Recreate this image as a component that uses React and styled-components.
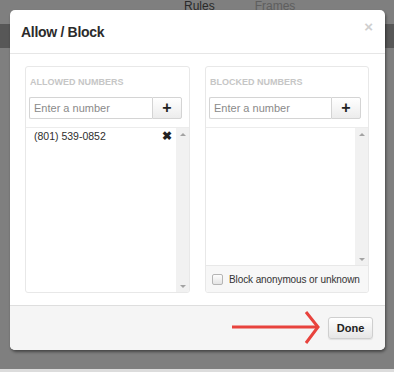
import React, { useState } from 'react';
import styled, { createGlobalStyle } from 'styled-components';

const Global = createGlobalStyle`
  html, body { margin: 0; padding: 0; }
  body {
    width: 394px;
    height: 372px;
    overflow: hidden;
    background: #7f7f7f;
    font-family: "Liberation Sans", Arial, sans-serif;
  }
`;

const Page = styled.div`
  position: relative;
  width: 394px;
  height: 372px;
  display: flex;
  flex-direction: column;
`;

const Tabs = styled.div`
  height: 24px;
  display: flex;
  gap: 40px;
  padding-left: 184px;
  font-size: 12px;
  line-height: 12px;
  span { color: #2a2a2a; }
  span + span { color: #5e5e5e; }
`;

const DarkBand = styled.div`
  height: 24px;
  background: #575757;
`;

const Filler = styled.div`
  flex: 1;
`;

const BottomStrip = styled.div`
  height: 3px;
  background: #dcdcdc;
`;

const Modal = styled.div`
  position: absolute;
  left: 10px;
  top: 10px;
  width: 375px;
  height: 340px;
  background: #fff;
  border-radius: 5px;
  box-shadow: 1px 2px 3px rgba(0, 0, 0, 0.45);
  display: flex;
  flex-direction: column;
  overflow: hidden;
`;

const Header = styled.div`
  height: 43px;
  border-bottom: 1px solid #e6e6e6;
  display: flex;
  align-items: center;
  padding: 0 12px 0 11px;
  position: relative;
`;

const Title = styled.h3`
  margin: 1px 0 0;
  font-size: 14px;
  letter-spacing: -0.3px;
  font-weight: bold;
  color: #2b2b2b;
`;

const Close = styled.span`
  position: absolute;
  right: 12px;
  top: 8px;
  font-size: 15px;
  font-weight: bold;
  color: #cfcfcf;
`;

const Body = styled.div`
  flex: 1;
  display: grid;
  grid-template-columns: 165px 164px;
  gap: 15px;
  padding: 12px 16px 12px 15px;
`;

const Panel = styled.div`
  border: 1px solid #e8e8e8;
  border-radius: 3px;
  display: flex;
  flex-direction: column;
  overflow: hidden;
`;

const PanelTitle = styled.div`
  padding: 10px 4px 0;
  height: 20px;
  font-size: 9px;
  font-weight: bold;
  color: #c6c6c6;
  text-transform: uppercase;
`;

const InputRow = styled.div`
  display: flex;
  margin: 0 7px 8px 3px;
  height: 22px;
`;

const Input = styled.input`
  flex: 1;
  min-width: 0;
  box-sizing: border-box;
  height: 22px;
  border: 1px solid #d4d4d4;
  border-right: none;
  border-radius: 2px 0 0 2px;
  padding: 0 4px;
  font-family: inherit;
  font-size: 11px;
  outline: none;
  &::placeholder { color: #8a8a8a; }
`;

const AddButton = styled.button`
  width: 30px;
  height: 22px;
  border: 1px solid #d4d4d4;
  border-radius: 0 2px 2px 0;
  background: linear-gradient(#ffffff, #ececec);
  font-family: inherit;
  font-size: 16px;
  font-weight: bold;
  color: #222;
  padding: 0;
  line-height: 18px;
`;

const List = styled.div`
  flex: 1;
  border-top: 1px solid #ececec;
  display: flex;
  min-height: 0;
`;

const Items = styled.div`
  flex: 1;
`;

const Item = styled.div`
  display: flex;
  align-items: center;
  justify-content: space-between;
  padding: 0 4px 0 8px;
  height: 16px;
  font-size: 10.5px;
  color: #2e2e2e;
`;

const Remove = styled.span`
  font-size: 12px;
  font-weight: bold;
  color: #222;
`;

const Scrollbar = styled.div`
  width: 13px;
  background: #f1f1f1;
  display: flex;
  flex-direction: column;
  justify-content: space-between;
  align-items: center;
  padding: 5px 0 4px;
`;

const Arrow = styled.span`
  width: 0;
  height: 0;
  border-left: 3px solid transparent;
  border-right: 3px solid transparent;
  ${p => p.$down
    ? 'border-top: 3px solid #a3a3a3;'
    : 'border-bottom: 3px solid #a3a3a3;'}
`;

const CheckRow = styled.label`
  height: 26px;
  border-top: 1px solid #e8e8e8;
  background: #f7f7f7;
  display: flex;
  align-items: center;
  gap: 6px;
  padding-left: 6px;
  font-size: 10px;
  letter-spacing: -0.1px;
  white-space: nowrap;
  color: #333;
`;

const Box = styled.span`
  flex: none;
  width: 9px;
  height: 9px;
  border: 1px solid #b5b5b5;
  border-radius: 2px;
  background: linear-gradient(#fdfdfd, #e4e4e4);
`;

const Footer = styled.div`
  height: 44px;
  border-top: 1px solid #dedede;
  background: #f5f5f5;
  display: flex;
  align-items: center;
  justify-content: flex-end;
  padding-right: 12px;
  position: relative;
`;

const Done = styled.button`
  width: 45px;
  height: 22px;
  margin-top: -1px;
  border: 1px solid #cfcfcf;
  border-radius: 3px;
  background: linear-gradient(#ffffff, #e6e6e6);
  box-shadow: 0 1px 1px rgba(0, 0, 0, 0.08);
  font-family: inherit;
  font-size: 11px;
  font-weight: bold;
  color: #222;
  padding: 0;
`;

const Annotation = styled.svg`
  position: absolute;
  left: 212px;
  top: 3px;
`;

function NumberPanel({ title, numbers, footer }) {
  const [value, setValue] = useState('');
  return (
    <Panel>
      <PanelTitle>{title}</PanelTitle>
      <InputRow>
        <Input placeholder="Enter a number" value={value} onChange={e => setValue(e.target.value)} />
        <AddButton>+</AddButton>
      </InputRow>
      <List>
        <Items>
          {numbers.map((n, idx) => (
            <Item key={idx}>
              {n}
              <Remove>✖</Remove>
            </Item>
          ))}
        </Items>
        <Scrollbar>
          <Arrow />
          <Arrow $down />
        </Scrollbar>
      </List>
      {footer}
    </Panel>
  );
}

export default function App() {
  return (
    <Page>
      <Global />
      <Tabs>
        <span>Rules</span>
        <span>Frames</span>
      </Tabs>
      <DarkBand />
      <Filler />
      <BottomStrip />

      <Modal>
        <Header>
          <Title>Allow / Block</Title>
          <Close>×</Close>
        </Header>
        <Body>
          <NumberPanel title="Allowed numbers" numbers={['(801) 539-0852']} />
          <NumberPanel
            title="Blocked numbers"
            numbers={[]}
            footer={
              <CheckRow>
                <Box />
                Block anonymous or unknown
              </CheckRow>
            }
          />
        </Body>
        <Footer>
          <Annotation width="100" height="40" viewBox="0 0 100 40">
            <line x1="10" y1="18" x2="95" y2="18" stroke="#e8433d" strokeWidth="3" />
            <polyline points="84,3 96,18 84,34" fill="none" stroke="#e8433d" strokeWidth="3" />
          </Annotation>
          <Done>Done</Done>
        </Footer>
      </Modal>
    </Page>
  );
}
